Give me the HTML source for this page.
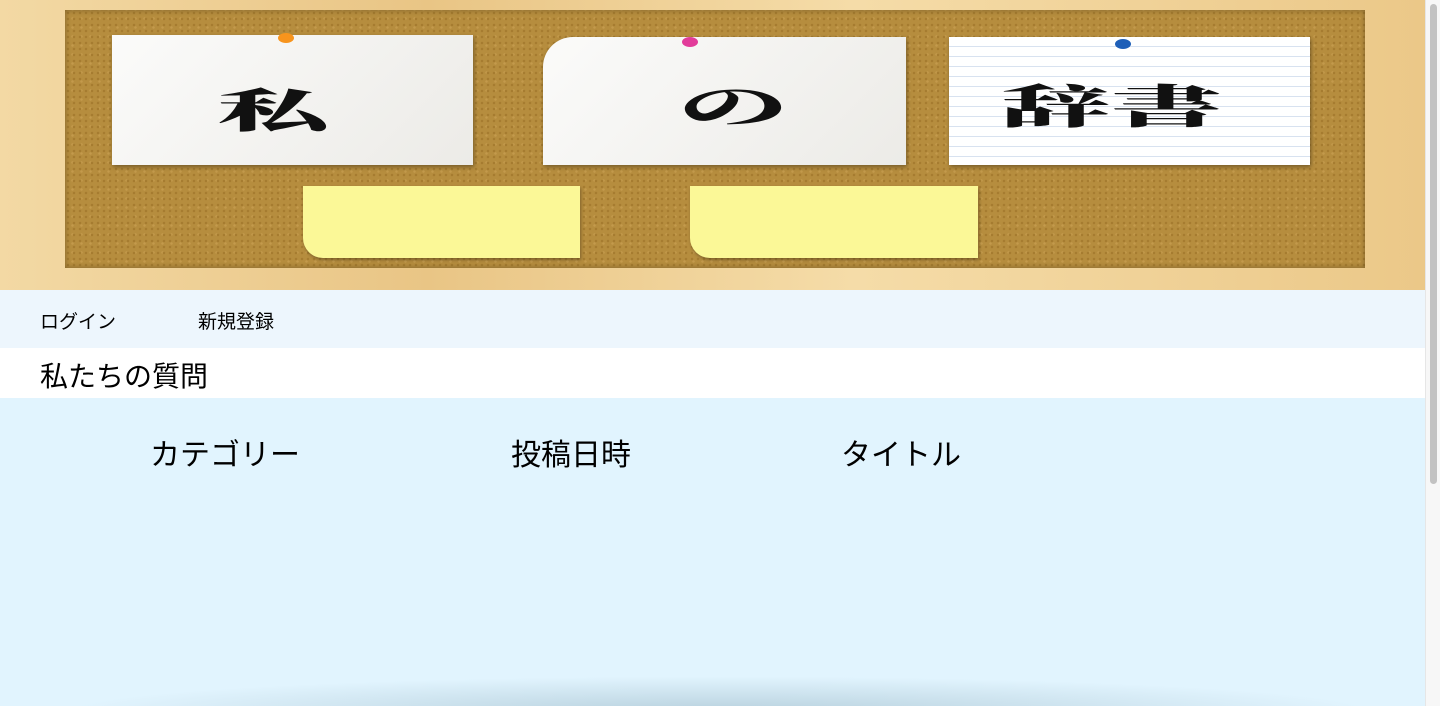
<!DOCTYPE html>
<html><head><meta charset="utf-8"><style>
*{margin:0;padding:0;box-sizing:border-box}
body{width:1440px;height:706px;overflow:hidden;font-family:"Liberation Sans","Noto Sans CJK JP",sans-serif;background:#e1f4fe;position:relative}
.sb{position:absolute;right:0;top:0;width:15px;height:706px;background:#f7f7f7;border-left:1px solid #e6e6e6}
.sb div{position:absolute;left:4px;top:4px;width:7px;height:480px;background:#c2c2c2;border-radius:4px}
.hdr{position:absolute;left:0;top:0;width:1425px;height:290px;background:linear-gradient(90deg,#f3d9a4,#e9c585 30%,#f5dca8 60%,#ebc888);}
.cork{position:absolute;left:65px;top:10px;width:1300px;height:258px;background:#b68d3e;background-image:radial-gradient(#a57c30 1px,transparent 1.5px),radial-gradient(#c39a4c 1px,transparent 1.5px);background-size:6px 6px,9px 9px;background-position:0 0,3px 4px;box-shadow:inset 0 0 6px rgba(0,0,0,.3)}
.note{position:absolute;background:linear-gradient(135deg,#fbfbfa,#ecebe7);box-shadow:1px 2px 4px rgba(0,0,0,.35);font-family:"Noto Serif CJK SC","Liberation Serif",serif;font-weight:bold;font-size:46px;color:#111}
.note b{position:absolute;top:46px;display:block;transform:scaleX(2.4);transform-origin:left top;line-height:1;white-space:nowrap}
.pin{position:absolute;width:16px;height:10px;border-radius:50%}
.y{position:absolute;background:#fbf897;box-shadow:1px 2px 3px rgba(0,0,0,.3)}
.nav{position:absolute;left:0;top:290px;width:1425px;height:58px;background:#edf6fd;font-size:19px}
.nav span{position:absolute;top:17px}
.h{position:absolute;left:0;top:348px;width:1425px;height:50px;background:#fff;font-size:28px;padding:7px 0 0 40px}
.th{position:absolute;top:430px;font-size:30px}
.sh{position:absolute;left:60px;top:676px;width:1320px;height:30px;background:radial-gradient(ellipse at 50% 120%,rgba(150,180,195,.55),rgba(225,244,254,0) 70%)}
</style></head><body>
<div class="hdr"><div class="cork">
<div class="note" style="left:47px;top:25px;width:361px;height:130px"><b style="left:106px;top:50px">私</b><div class="pin" style="left:166px;top:-2px;background:#f7941d"></div></div>
<div class="note" style="left:478px;top:27px;width:363px;height:128px;border-top-left-radius:30px"><b style="left:135px;top:44px">の</b><div class="pin" style="left:139px;top:0;background:#e23c9a"></div></div>
<div class="note" style="left:884px;top:27px;width:361px;height:128px;background:repeating-linear-gradient(#fff 0 9px,#d8e2f0 9px 10px)"><b style="left:52px;top:44px">辞書</b><div class="pin" style="left:166px;top:2px;background:#1e5fb8"></div></div>
<div class="y" style="left:238px;top:176px;width:277px;height:72px;border-bottom-left-radius:20px"></div>
<div class="y" style="left:625px;top:176px;width:288px;height:72px;border-bottom-left-radius:20px"></div>
</div></div>
<div class="nav"><span style="left:40px">ログイン</span><span style="left:198px">新規登録</span></div>
<div class="h">私たちの質問</div>
<div class="th" style="left:150px">カテゴリー</div>
<div class="th" style="left:511px">投稿日時</div>
<div class="th" style="left:841px">タイトル</div>
<div class="sh"></div>
<div class="sb"><div></div></div>
</body></html>
